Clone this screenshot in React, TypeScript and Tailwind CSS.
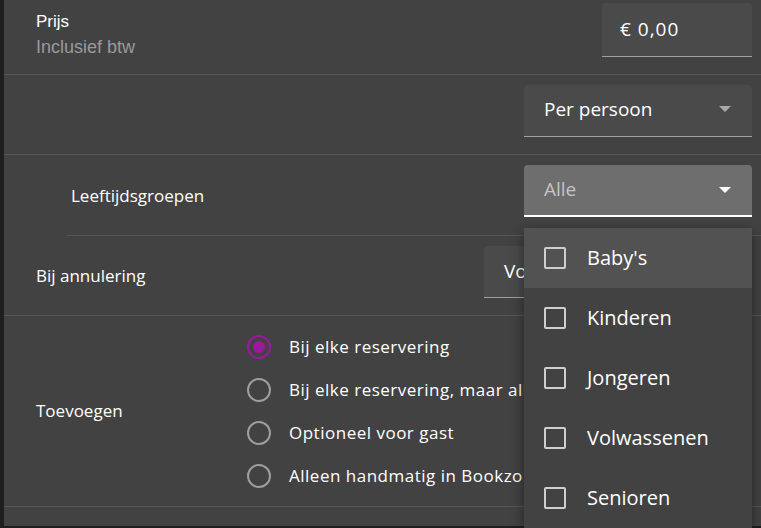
import { useState } from "react";

const ageGroups = ["Baby's", "Kinderen", "Jongeren", "Volwassenen", "Senioren"];

const addOptions = [
  "Bij elke reservering",
  "Bij elke reservering, maar alleen eenmalig",
  "Optioneel voor gast",
  "Alleen handmatig in Bookzo toevoegen",
];

const Caret = ({ color = "#bdbdbd" }: { color?: string }) => (
  <svg width="12" height="6" viewBox="0 0 12 6" className="shrink-0">
    <path d="M0 0h12L6 6z" fill={color} />
  </svg>
);

const App = () => {
  const [selected, setSelected] = useState(0);
  const [checked, setChecked] = useState<string[]>([]);

  const toggle = (name: string) => {
    setChecked((prev) =>
      prev.includes(name) ? prev.filter((n) => n !== name) : [...prev, name]
    );
  };

  return (
    <div className="h-[528px] w-full overflow-hidden bg-[#1e1e1e]">
      <div
        className="ml-[1px] h-[526px] border-l-[3px] border-[#1e1e1e] bg-[#424242] text-white"
        style={{ fontFamily: "'Open Sans', Lato, sans-serif" }}
      >
        {/* price */}
        <div className="flex h-[75px] justify-between border-b border-[#575757] pl-[32px] pr-[9px]">
          <div
            className="pt-[12px] text-[17px] leading-[20px]"
            style={{ fontFamily: "'Liberation Sans', Arial, sans-serif" }}
          >
            <p>Prijs</p>
            <p className="mt-[5px] text-[18px] text-[#9a9a9a]">Inclusief btw</p>
          </div>
          <div className="mt-[3px] flex h-[54px] w-[150px] items-center rounded-t-[4px] border-b border-[#a0a0a0] bg-[#4a4a4a] px-[18px] text-[19px] tracking-[1px]">
            € 0,00
          </div>
        </div>

        {/* price unit */}
        <div className="flex h-[80px] justify-end border-b border-[#575757] pr-[9px] pt-[10px]">
          <div className="flex h-[52px] w-[228px] items-center justify-between rounded-t-[4px] border-b border-[#a0a0a0] bg-[#4a4a4a] pb-[3px] pl-[20px] pr-[21px] text-[19px]">
            <span>Per persoon</span>
            <Caret color="#a8a8a8" />
          </div>
        </div>

        {/* age groups */}
        <div className="pl-[63px]">
          <div className="flex h-[81px] items-start justify-between border-b border-[#575757] pr-[9px] pt-[10px]">
            <span className="mt-[21px] pl-[4px] text-[17px] leading-[20px]">
              Leeftijdsgroepen
            </span>
            <div className="relative">
              <div className="flex h-[52px] w-[228px] items-center justify-between rounded-t-[4px] border-b-2 border-white bg-[#6e6e6e] pb-[1px] pl-[20px] pr-[21px] text-[19px] text-[#c4c4c4]">
                <span>Alle</span>
                <Caret color="#ffffff" />
              </div>

              <ul className="absolute left-0 top-[63px] z-10 w-[228px] bg-[#424242] shadow-[0_4px_12px_rgba(0,0,0,0.45)]">
                {ageGroups.map((name, i) => (
                  <li
                    key={name}
                    onClick={() => toggle(name)}
                    className={`flex h-[60px] cursor-pointer items-center gap-[21px] pl-[20px] text-[20px] ${
                      i === 0 ? "bg-[#525252]" : ""
                    }`}
                  >
                    <span
                      className={`h-[22px] w-[22px] shrink-0 rounded-[2px] border-2 border-[#cfcfcf] ${
                        checked.includes(name) ? "bg-[#cfcfcf]" : ""
                      }`}
                    />
                    <span>{name}</span>
                  </li>
                ))}
              </ul>
            </div>
          </div>
        </div>

        {/* cancellation */}
        <div className="flex h-[80px] items-start justify-between border-b border-[#575757] pl-[32px] pr-[9px] pt-[10px]">
          <span className="mt-[20px] text-[17px] leading-[20px]">Bij annulering</span>
          <div className="flex h-[52px] w-[268px] items-center rounded-t-[4px] border-b border-[#a0a0a0] bg-[#4a4a4a] pl-[20px] text-[19px]">
            Volledig terugbetalen
          </div>
        </div>

        {/* add mode */}
        <div className="flex h-[191px] items-center border-b border-[#575757] pl-[32px]">
          <span className="w-[211px] text-[17px] leading-[20px]">Toevoegen</span>
          <div className="flex flex-col">
            {addOptions.map((label, i) => (
              <label
                key={label}
                onClick={() => setSelected(i)}
                className="flex h-[43px] cursor-pointer items-center gap-[18px] whitespace-nowrap text-[17px] tracking-[0.5px]"
              >
                <span
                  className={`flex h-[24px] w-[24px] shrink-0 items-center justify-center rounded-full border-2 ${
                    selected === i ? "border-[#9a1b9a]" : "border-[#9e9e9e]"
                  }`}
                >
                  {selected === i && (
                    <span className="h-[12px] w-[12px] rounded-full bg-[#9a1b9a]" />
                  )}
                </span>
                {label}
              </label>
            ))}
          </div>
        </div>
      </div>
    </div>
  );
};

export default App;
